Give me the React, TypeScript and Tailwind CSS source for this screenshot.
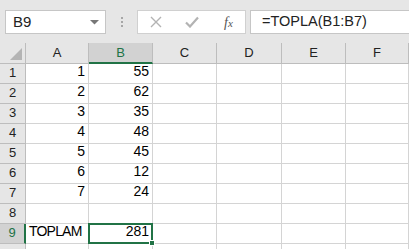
import React from "react";

const cols = ["A", "B", "C", "D", "E", "F"];
const colW = [63, 64, 64, 65, 64, 63];
const rows: [string, string, string][] = [
  ["1", "1", "55"],
  ["2", "2", "62"],
  ["3", "3", "35"],
  ["4", "4", "48"],
  ["5", "5", "45"],
  ["6", "6", "12"],
  ["7", "7", "24"],
  ["8", "", ""],
  ["9", "TOPLAM", "281"],
  ["", "", ""],
];

export default function App() {
  const gridCols = `26px ${colW.map((w) => w + "px").join(" ")}`;
  return (
    <div
      className="w-[409px] h-[249px] overflow-hidden bg-[#e6e6e6] text-black"
      style={{ fontFamily: '"Liberation Sans", Arial, sans-serif' }}
    >
      {/* formula bar */}
      <div className="flex items-start h-[43px] pt-[10px]">
        <div className="ml-[5px] w-[101px] h-[24px] bg-white border border-[#c6c6c6] flex items-center justify-between pl-[7px] pr-[6px]">
          <span className="text-[15px] text-[#222]">B9</span>
          <svg width="9" height="5" viewBox="0 0 9 5">
            <polygon points="0,0 9,0 4.5,4.5" fill="#777" />
          </svg>
        </div>
        <div className="w-[31px] h-[24px] flex flex-col items-center justify-center gap-[2px]">
          <div className="w-[2px] h-[2px] bg-[#a6a6a6]" />
          <div className="w-[2px] h-[2px] bg-[#a6a6a6]" />
          <div className="w-[2px] h-[2px] bg-[#a6a6a6]" />
        </div>
        <div className="w-[109px] h-[24px] bg-white border border-[#d0d0d0] flex items-center">
          <svg width="12" height="12" viewBox="0 0 12 12" className="ml-[12px]">
            <path d="M1 1 L11 11 M11 1 L1 11" stroke="#b3b3b3" strokeWidth="1.4" />
          </svg>
          <svg width="14" height="12" viewBox="0 0 14 12" className="ml-[23px]">
            <path d="M1 6.5 L5 10.5 L13 1.5" stroke="#b3b3b3" strokeWidth="2.2" fill="none" />
          </svg>
          <span
            className="ml-[25px] text-[14px] italic text-[#555]"
            style={{ fontFamily: '"Liberation Serif", "Times New Roman", serif' }}
          >
            f<span className="text-[11px]">x</span>
          </span>
        </div>
        <div className="ml-[4px] flex-1 h-[24px] bg-white border border-[#c6c6c6] border-r-0 flex items-center pl-[11px]">
          <span className="text-[14.5px] text-[#222]">=TOPLA(B1:B7)</span>
        </div>
      </div>

      {/* grid */}
      <div
        className="grid bg-white"
        style={{ gridTemplateColumns: gridCols, gridTemplateRows: "21px repeat(10, 20px)" }}
      >
        {/* header row */}
        <div className="bg-[#e6e6e6] border-r border-b border-[#bdbdbd] relative">
          <svg width="12" height="12" viewBox="0 0 12 12" className="absolute left-[10px] top-[5px]">
            <polygon points="12,0 12,12 0,12" fill="#b4b4b4" />
          </svg>
        </div>
        {cols.map((c) =>
          c === "B" ? (
            <div
              key={c}
              className="bg-[#d2d2d2] border-r border-[#bdbdbd] border-b-2 border-b-[#217346] flex items-center justify-center text-[13px] text-[#217346] pt-[1px]"
            >
              {c}
            </div>
          ) : (
            <div
              key={c}
              className="bg-[#e6e6e6] border-r border-b border-[#bdbdbd] flex items-center justify-center text-[13px] text-[#222]"
            >
              {c}
            </div>
          )
        )}

        {rows.map(([n, a, b], i) => {
          const sel = n === "9";
          return (
            <React.Fragment key={i}>
              <div
                className={
                  sel
                    ? "bg-[#d2d2d2] border-b border-[#bdbdbd] border-r-2 border-r-[#217346] flex items-end justify-center pb-[1px] text-[13px] text-[#217346]"
                    : "bg-[#e6e6e6] border-r border-b border-[#bdbdbd] flex items-end justify-center pb-[1px] text-[13px] text-[#222]"
                }
              >
                {n}
              </div>
              <div
                className={
                  "border-r border-b border-[#d4d4d4] flex items-end pb-[1px] " +
                  (a === "TOPLAM"
                    ? "justify-start pl-[3px] text-[14px] tracking-[-0.8px]"
                    : "justify-end pr-[3px] text-[14px]")
                }
              >
                {a}
              </div>
              <div
                className={
                  sel
                    ? "relative border-2 border-[#217346] -mt-[1px] -ml-[1px] flex items-end justify-end pr-[2px] text-[14px]"
                    : "border-r border-b border-[#d4d4d4] flex items-end justify-end pr-[3px] pb-[1px] text-[14px]"
                }
              >
                {b}
                {sel && (
                  <div className="absolute -right-[4px] -bottom-[4px] w-[6px] h-[6px] bg-[#217346] border border-white" />
                )}
              </div>
              <div className="border-r border-b border-[#d4d4d4]" />
              <div className="border-r border-b border-[#d4d4d4]" />
              <div className="border-r border-b border-[#d4d4d4]" />
              <div className="border-r border-b border-[#d4d4d4]" />
            </React.Fragment>
          );
        })}
      </div>
    </div>
  );
}
